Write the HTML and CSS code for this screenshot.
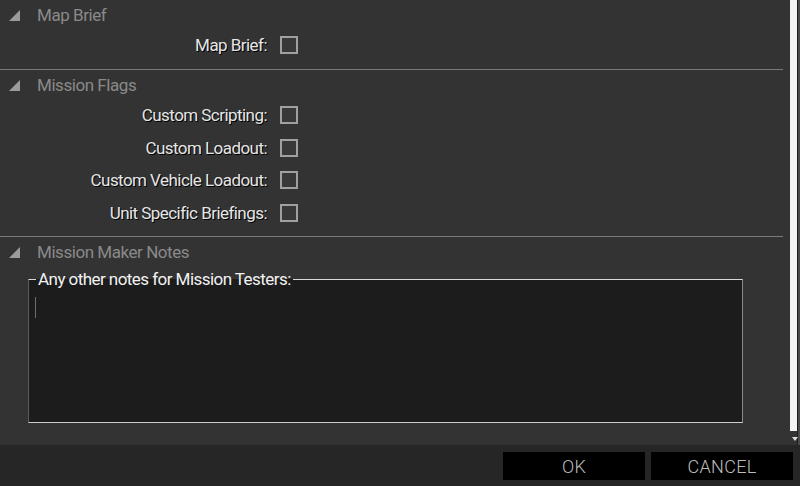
FILE: index.html
```html
<!DOCTYPE html>
<html>
<head>
<meta charset="utf-8">
<link rel="stylesheet" href="styles.css">
</head>
<body>
<div class="window">
  <div class="content">
    <div class="main">
      <section class="section first">
        <div class="section-header">
          <svg class="tri" width="11" height="11" viewBox="0 0 11 11"><polygon points="11,0 11,11 0,11" fill="#9b9b9b"/></svg>
          <span class="header-title">Map Brief</span>
        </div>
        <div class="rows">
          <div class="row"><span class="label">Map Brief:</span><input type="checkbox" class="check"></div>
        </div>
      </section>
      <section class="section">
        <div class="section-header">
          <svg class="tri" width="11" height="11" viewBox="0 0 11 11"><polygon points="11,0 11,11 0,11" fill="#9b9b9b"/></svg>
          <span class="header-title">Mission Flags</span>
        </div>
        <div class="rows">
          <div class="row"><span class="label">Custom Scripting:</span><input type="checkbox" class="check"></div>
          <div class="row"><span class="label">Custom Loadout:</span><input type="checkbox" class="check"></div>
          <div class="row"><span class="label">Custom Vehicle Loadout:</span><input type="checkbox" class="check"></div>
          <div class="row"><span class="label">Unit Specific Briefings:</span><input type="checkbox" class="check"></div>
        </div>
      </section>
      <section class="section">
        <div class="section-header">
          <svg class="tri" width="11" height="11" viewBox="0 0 11 11"><polygon points="11,0 11,11 0,11" fill="#9b9b9b"/></svg>
          <span class="header-title">Mission Maker Notes</span>
        </div>
        <fieldset class="notes">
          <legend class="notes-legend">Any other notes for Mission Testers:</legend>
          <div class="caret"></div>
        </fieldset>
      </section>
    </div>
    <div class="scrollbar">
      <div class="thumb"></div>
      <div class="arrow"></div>
    </div>
  </div>
  <div class="footer">
    <button class="btn">OK</button>
    <button class="btn">CANCEL</button>
  </div>
</div>
</body>
</html>
```

FILE: styles.css
```css
html, body {
  margin: 0;
  padding: 0;
  background: #262626;
}
body {
  font-family: Roboto, "Liberation Sans", sans-serif;
}
.window {
  width: 800px;
  height: 486px;
  display: flex;
  flex-direction: column;
}
.content {
  height: 445px;
  display: flex;
  background: #333333;
}
.main {
  flex: 1;
  padding-right: 7px;
}
.section {
  border-top: 1px solid #7a7a7a;
}
.section.first {
  border-top: none;
}
.section-header {
  height: 29px;
  display: flex;
  align-items: center;
  padding-left: 9px;
}
.tri {
  display: block;
  margin-top: 1px;
}
.header-title {
  margin-left: 17px;
  color: #8a8a8a;
  font-size: 17px;
  letter-spacing: -0.45px;
}
.rows {
  padding-bottom: 7px;
}
.first .rows {
  padding-bottom: 8px;
}
.row {
  display: grid;
  grid-template-columns: 267px 18px;
  column-gap: 13px;
  align-items: center;
  height: 32.5px;
}
.first .row {
  height: 32px;
}
.label {
  text-align: right;
  color: #e6e6e6;
  font-size: 17px;
  letter-spacing: -0.55px;
  text-shadow: 1px 1px 0 #000;
}
.check {
  appearance: none;
  -webkit-appearance: none;
  margin: 0;
  width: 18px;
  height: 18px;
  box-sizing: border-box;
  border: 2px solid #a0a0a0;
  background: #383838;
}
.notes {
  margin: 4px 0 0 28px;
  width: 715px;
  height: 153px;
  box-sizing: border-box;
  padding: 0;
  min-width: 0;
  border-style: solid;
  border-width: 1px;
  border-color: #d8d8d8 #8a8a8a #cfcfcf #5c5c5c;
  background: #1c1c1c;
}
.notes-legend {
  margin-left: 7px;
  padding: 0 2px;
  color: #f2f2f2;
  font-size: 17px;
  letter-spacing: -0.55px;
  line-height: 19px;
}
.caret {
  width: 1px;
  height: 21px;
  background: #6e6e6e;
  margin: 8px 0 0 6px;
}
.scrollbar {
  width: 10px;
  display: flex;
  flex-direction: column;
  background: linear-gradient(to right, transparent 7px, #1e1e1e 7px, #1e1e1e 8px, #4a4a4a 8px);
}
.thumb {
  width: 7px;
  height: 431px;
  background: #f4f4f4;
}
.arrow {
  width: 0;
  height: 0;
  margin: 6px 0 0 2px;
  border-left: 3px solid transparent;
  border-right: 3px solid transparent;
  border-top: 4px solid #dcdcdc;
}
.footer {
  flex: 1;
  display: flex;
  justify-content: flex-end;
  align-items: flex-start;
  gap: 6px;
  padding: 7px 7px 0 0;
}
.btn {
  width: 142px;
  height: 28px;
  background: #000;
  border: none;
  margin: 0;
  padding: 0;
  color: #bdbdbd;
  font-family: Roboto, "Liberation Sans", sans-serif;
  font-weight: 300;
  font-size: 18px;
  letter-spacing: 0.3px;
}
```
